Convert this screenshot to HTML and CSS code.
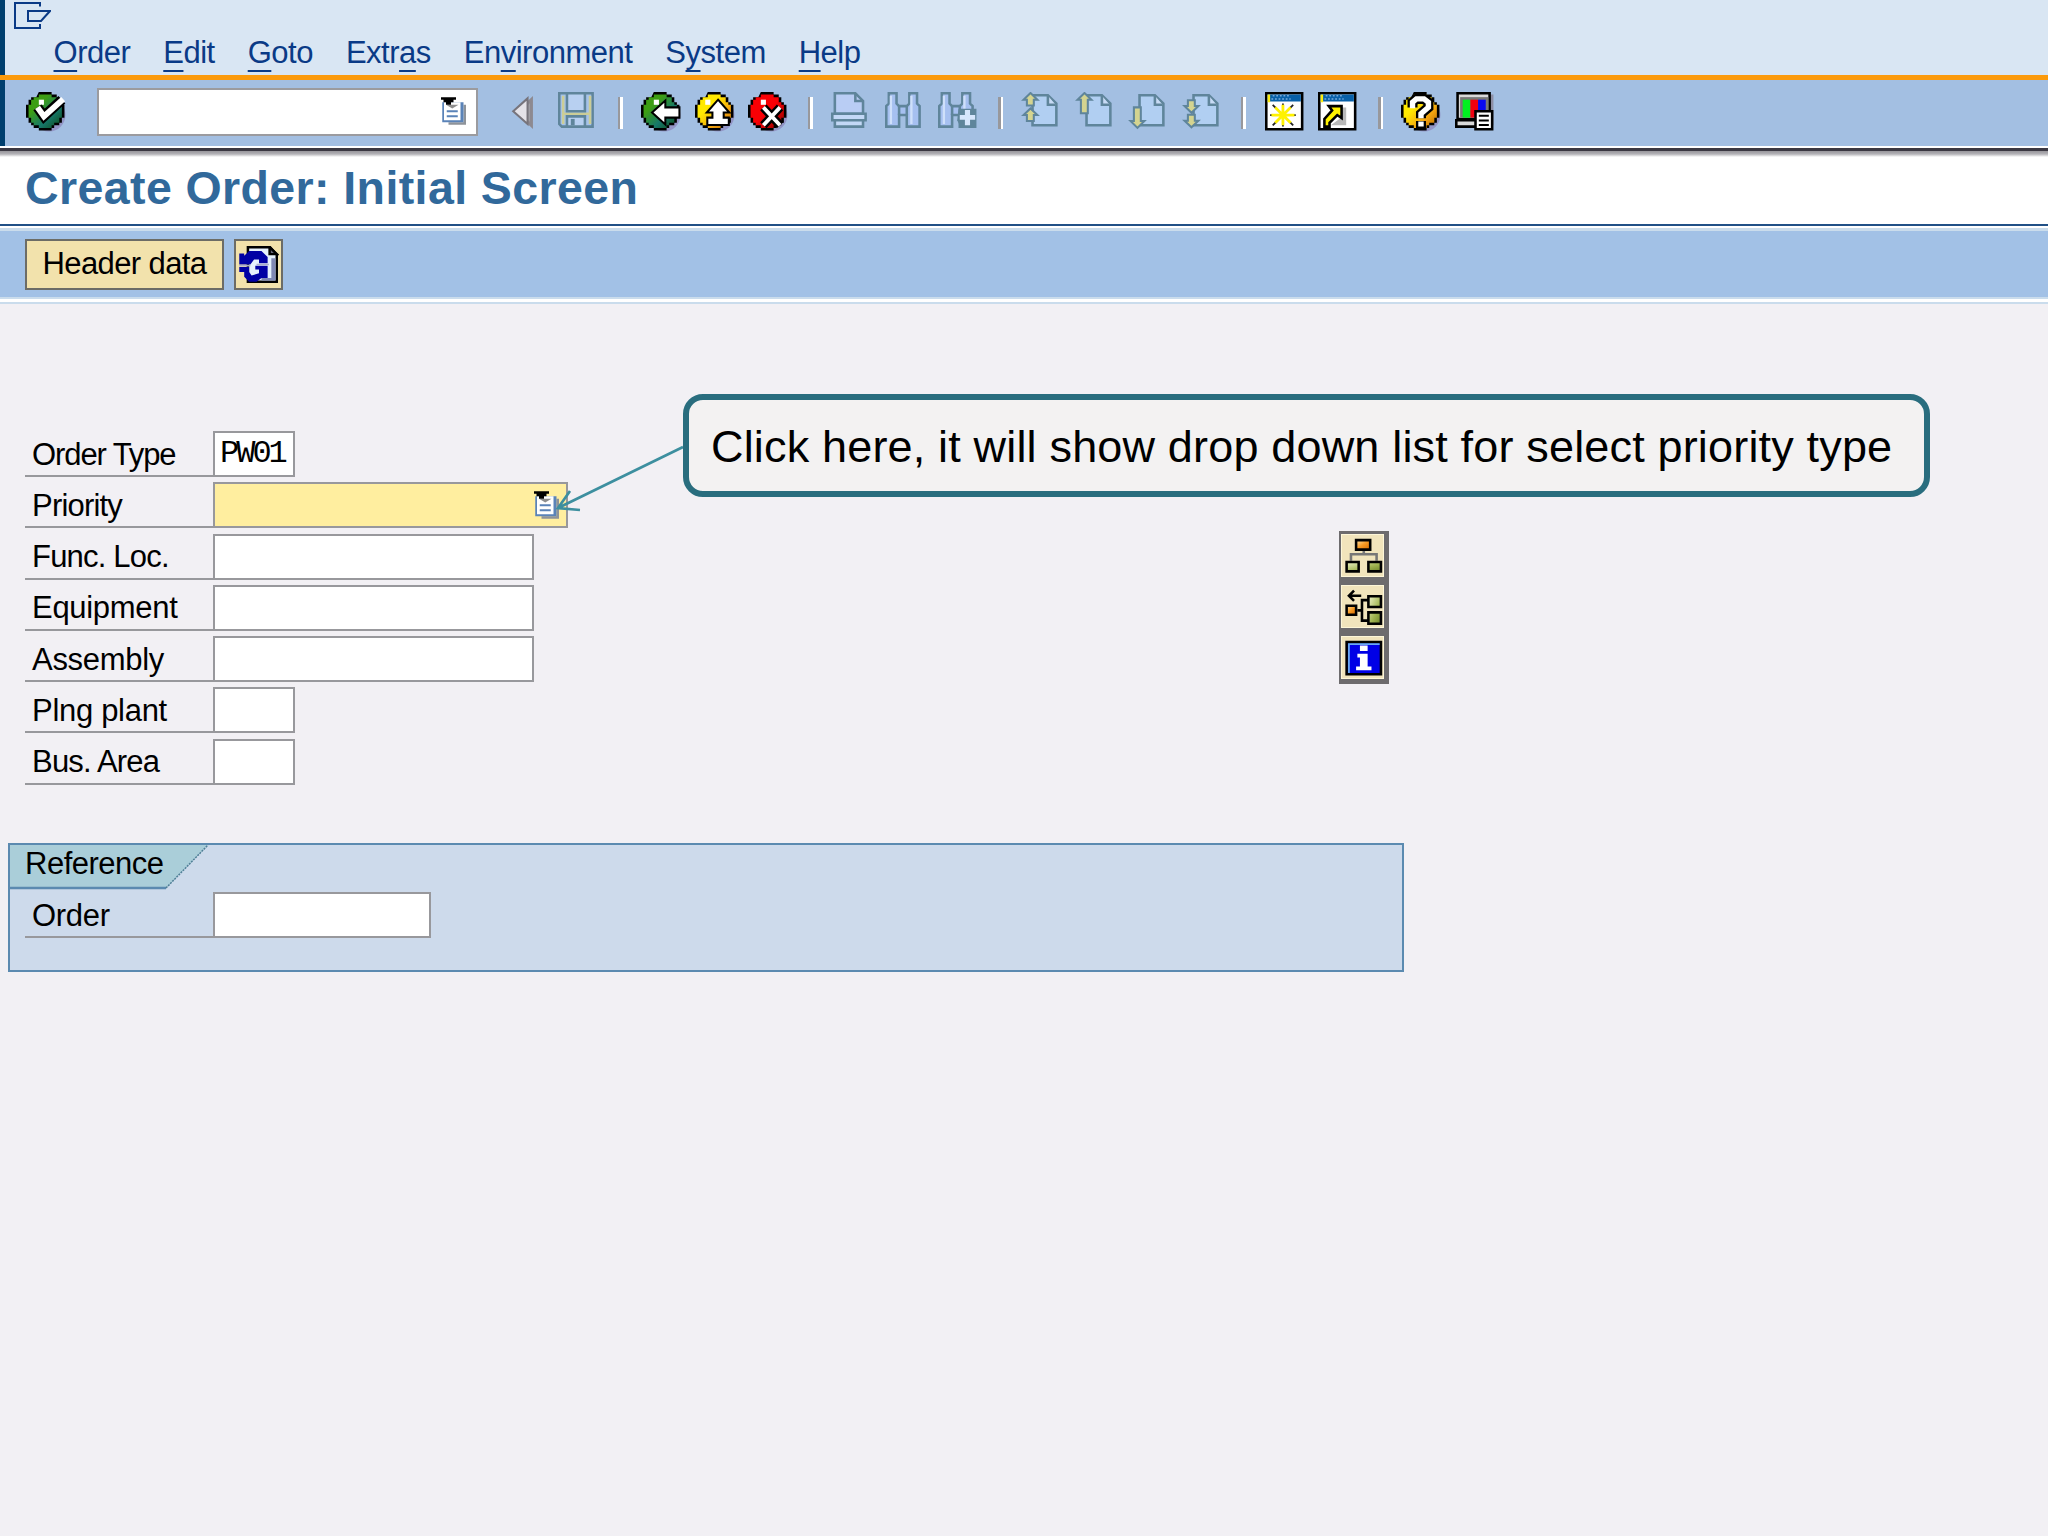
FILE: index.html
```html
<!DOCTYPE html>
<html lang="en">
<head>
	<meta charset="UTF-8">
	<title>Create Order: Initial Screen</title>
	<link rel="stylesheet" href="styles.css">
</head>
<body>
	<!-- shared shapes, one unit is one icon pixel -->
	<svg class="defs">
		<defs>
			<g id="ball">
				<circle cx="9" cy="9" r="6.4" fill="#9295c6"/>
				<path fill="#000" d="M5 0h5v1h2v1h1v2h1v1h1v5h-1v2h-1v1h-2v1h-1v1h-5v-1h-2v-1h-1v-1h-1v-2h-1v-5h1v-2h1v-1h2z"/>
			</g>
			<path id="ballFace" d="M5 1h5v1h2v2h1v1h1v5h-1v2h-2v1h-1v1h-5v-1h-2v-1h-1v-2h-1v-5h1v-2h1v-1h2z"/>
			<g id="page">
				<path d="M4.500 13V1.300H10.500L13.800 4.500V13Z" fill="#b1cff2" stroke="#5f859b"/>
				<path d="M10.500 1.500V5H13.500" fill="#c8dbf5" stroke="#5f859b"/>
			</g>
			<path id="up" d="M3.700 .4L6.400 3H5V5.300H2.300V3H1Z" fill="#d4d490" stroke="#5f859b" stroke-width=".8"/>
			<g id="binoc" stroke="#5f859b" fill="#a6c0f0">
				<path d="M1.500 .5H4.500V4.500L5.500 5.500H8.500L9.500 4.500V.5H12.500V4.500L13.500 5.500V13.500H8.500V9H5.500V13.500H.5V5.500L1.500 4.500Z"/>
				<path d="M5.500 5.500V9M8.500 5.500V9" fill="none"/>
				<path d="M2.300 1.500V12.500M10.300 1.500V12.500" stroke="#cfe0fa" stroke-width=".9"/>
			</g>
			<g id="list">
				<path fill="#8e9399" d="M3 10H9V3H10V11H3Z"/>
				<path fill="#5a83b8" d="M.5 2H9V10H.5Z"/>
				<path fill="#fff" d="M1.200 2H7.800V9.200H1.200Z"/>
				<path fill="#5a83b8" d="M2.300 5.200H6.700V6H2.300ZM2.300 7.200H6.700V8H2.300Z"/>
				<path fill="#8e8e8e" d="M2 3H7L4.500 4.500Z"/>
				<path fill="#000" d="M0 0H6V1H5V2H4V3H2V2H1V1H0Z"/>
			</g>
			<g id="win">
				<path d="M.5 .5H14.500V14.500H.5Z" fill="#fff" stroke="#000"/>
				<path d="M1 1H14V3.700H1Z" fill="#0860a8"/>
				<path d="M3 1.500H10M2.500 2.700H10" stroke="#77aadd" stroke-width=".6" stroke-dasharray=".7 .7" fill="none"/>
				<path d="M1 1H2V4H1Z" fill="#ffee10"/>
			</g>
			<linearGradient id="green" x2="1" y2="1"><stop offset=".3" stop-color="#3d9e14"/><stop offset=".65" stop-color="#16776b"/><stop offset="1" stop-color="#0e4a14"/></linearGradient>
			<linearGradient id="gold" x2="1" y2="1"><stop offset=".35" stop-color="#ffe900"/><stop offset=".7" stop-color="#f3a310"/><stop offset="1" stop-color="#b76a00"/></linearGradient>
			<linearGradient id="red" x2="1" y2="1"><stop offset=".5" stop-color="#fa0004"/><stop offset="1" stop-color="#8c0000"/></linearGradient>
			<linearGradient id="leaf" x2="1" y2="1"><stop offset="0" stop-color="#f0f4cc"/><stop offset=".6" stop-color="#a0b450"/><stop offset="1" stop-color="#6d8428"/></linearGradient>
			<linearGradient id="amber" x2="1" y2="1"><stop offset="0" stop-color="#ffe4a8"/><stop offset=".5" stop-color="#f79a24"/><stop offset="1" stop-color="#d66a00"/></linearGradient>
		</defs>
	</svg>

	<header class="top">
		<div class="window-bar">
			<svg class="window-icon" viewBox="0 0 37 27"><path d="M26 4.500V1H1V26H26V22M14 9H36L27 19H14Z"/></svg>
		</div>
		<nav class="menu">
			<span><u>O</u>rder</span>
			<span><u>E</u>dit</span>
			<span><u>G</u>oto</span>
			<span>Extr<u>a</u>s</span>
			<span>En<u>v</u>ironment</span>
			<span>S<u>y</u>stem</span>
			<span><u>H</u>elp</span>
		</nav>
		<div class="toolbar">
			<svg class="icon" viewBox="0 0 16 16">
				<use href="#ball"/><use href="#ballFace" fill="url(#green)"/>
				<path fill="#fff" d="M5 3H7V5H5Z"/>
				<path d="M4.500 6L7 9.500L14 3" fill="none" stroke="#000" stroke-width="4"/>
				<path d="M4.500 6L7 9.500L14.500 2.800" fill="none" stroke="#fff" stroke-width="2.300"/>
			</svg>
			<div class="command"><svg class="list-icon" viewBox="0 0 10 11"><use href="#list"/></svg></div>
			<svg class="icon" viewBox="0 0 16 16"><path d="M5 8L10.300 3V13Z" fill="#a19fa6" stroke="#8d8990" stroke-width="1.200"/><path d="M3.200 7.500L8.800 2.500V12.500Z" fill="#e4e2e8" stroke="#77747c" stroke-width=".8"/></svg>
			<svg class="icon" viewBox="0 0 16 16">
				<path d="M.5 .5H13.500V13.500H1.500L.5 12.500Z" fill="#a5c2ea" stroke="#5f859b"/>
				<path d="M2 1.500V12.500M12.500 1.500V12.500M2 8.500H12" stroke="#cccd96" fill="none"/>
				<path d="M3.500 .5H10.500V7.500H3.500ZM3.500 9.500H10.500V13.500H3.500Z" fill="#b8d0f1" stroke="#5f859b"/>
				<path d="M5 10.500H6.500V13H5Z" fill="#5f859b"/>
			</svg>
			<i class="sep"></i>
			<svg class="icon" viewBox="0 0 16 16">
				<use href="#ball"/><use href="#ballFace" fill="url(#green)"/>
				<path fill="#fff" d="M5 3H7V5H5Z"/>
				<path d="M4.300 8L9.500 3.300V6H15V10H9.500V12.700Z" fill="#fff" stroke="#000" stroke-width=".8"/>
			</svg>
			<svg class="icon" viewBox="0 0 16 16">
				<use href="#ball"/><use href="#ballFace" fill="url(#gold)"/>
				<path fill="#fff" d="M4 3H6V5H4Z"/>
				<path d="M9 3L13.400 8H11.200V10H13.200V12.900H4.800V10H6.800V8H4.600Z" fill="#fff" stroke="#000" stroke-width=".8"/>
			</svg>
			<svg class="icon" viewBox="0 0 16 16">
				<use href="#ball"/><use href="#ballFace" fill="url(#red)"/>
				<path fill="#fff" d="M5 3H7V5H5Z"/>
				<path d="M6 6L12.500 13M12.500 6L6 13" stroke="#000" stroke-width="3.400"/>
				<path d="M6 6L12.500 13M12.500 6L6 13" stroke="#fff" stroke-width="1.500"/>
			</svg>
			<i class="sep"></i>
			<svg class="icon" viewBox="0 0 16 16">
				<path d="M1.500 8.500V.5H9.500L12.500 3.500V8.500Z" fill="#b9cdf4" stroke="#5f859b"/>
				<path d="M9.500 .5V3.500H12.500" fill="none" stroke="#5f859b"/>
				<path d="M.5 8.500H13.500V11H.5ZM1.500 11H12.500V13.500H1.500Z" fill="#c3d8f6" stroke="#5f859b"/>
			</svg>
			<svg class="icon" viewBox="0 0 16 16"><use href="#binoc"/></svg>
			<svg class="icon" viewBox="0 0 16 16">
				<use href="#binoc"/>
				<path d="M8 6.500H15V14H9L7.500 11Z" fill="#5f859b"/>
				<path d="M10.500 7H12.500V9H14.500V10.800H12.500V13H10.500V10.800H8.500V9H10.500Z" fill="#d6e6fc"/>
			</svg>
			<i class="sep"></i>
			<svg class="icon" viewBox="0 0 16 16"><use href="#page"/><use href="#up"/><use href="#up" y="6"/></svg>
			<svg class="icon" viewBox="0 0 16 16"><use href="#page"/><path d="M3.700 .4L6.400 3H5V8.300H2.300V3H1Z" fill="#d4d490" stroke="#5f859b" stroke-width=".8"/></svg>
			<svg class="icon" viewBox="0 0 16 16"><use href="#page"/><path d="M3.700 14L6.400 11.300H5V6H2.300V11.300H1Z" fill="#d4d490" stroke="#5f859b" stroke-width=".8"/></svg>
			<svg class="icon" viewBox="0 0 16 16"><use href="#page"/><use href="#up" transform="matrix(1 0 0 -1 0 8.500)"/><use href="#up" transform="matrix(1 0 0 -1 0 14.200)"/></svg>
			<i class="sep"></i>
			<svg class="icon" viewBox="0 0 16 16">
				<use href="#win"/>
				<path d="M2 9H12M7 4.500V13.500M3 5L11 13M11 5L3 13" stroke="#222" stroke-width=".7"/>
				<path d="M2.500 9H11.500M7 5V13M4 6L10 12M10 6L4 12" stroke="#fff200" stroke-width="1.100"/>
				<path d="M6 8H8V10H6Z" fill="#fff200"/>
			</svg>
			<svg class="icon" viewBox="0 0 16 16">
				<use href="#win"/>
				<path d="M9 6H11V13H5L9 10Z" fill="#b9b9b9"/>
				<path d="M2.500 13.500V10.500L5.500 7.200L4.200 5.500H9.200V10.200L7.500 9L4.500 12V13.500Z" fill="#fff200" stroke="#000"/>
			</svg>
			<i class="sep"></i>
			<svg class="icon" viewBox="0 0 16 16">
				<use href="#ball"/><use href="#ballFace" fill="url(#gold)"/>
				<path d="M4.500 6V4L6 2.700H9L10.700 4V6L7.800 8.500V10.200M7.800 11.300V14" fill="none" stroke="#000" stroke-width="3.900"/>
				<path d="M4.500 6.300V4L6 2.700H9L10.700 4V6L7.800 8.500V10.200M7.800 11.500V13.500" fill="none" stroke="#fff" stroke-width="2.100"/>
			</svg>
			<svg class="icon" viewBox="0 0 16 16">
				<path d="M2 1H15V13H2Z" fill="#8e8fa5"/>
				<path d="M1 .5H13.500V10.500H1ZM.5 11H13.500V13.500H.5Z" fill="#d9d9d9" stroke="#000"/>
				<path d="M2 2H13V10H2Z" fill="#777"/>
				<path d="M3 3H6V10H3Z" fill="#00f020"/><path d="M6 3H9V10H6Z" fill="#f00010"/><path d="M9 3H12V10H9Z" fill="#0808f0"/>
				<path d="M8 7.500H14.500V14.500H8Z" fill="#fff" stroke="#000"/>
				<path d="M9.300 9.300H13.200M9.300 11.100H13.200M9.300 12.900H13.200" stroke="#000" stroke-width=".8"/>
			</svg>
		</div>
	</header>

	<h1 class="title">Create Order: Initial Screen</h1>

	<div class="actions">
		<button class="btn">Header data</button>
		<button class="btn btn-icon">
			<svg viewBox="0 0 16 15">
				<path d="M3.500 .5H12.500L15.200 3.500V14.500H3.500Z" fill="#e6f1fd" stroke="#000"/>
				<path d="M12.300 .5V3.300H15.200Z" fill="#66667a" stroke="#000"/>
				<path d="M13 5H14.700V14H9V13H13Z" fill="#8088b4"/>
				<path d="M0 3H2V4L4 2H9L11.500 4.500V7H8V5.500H6L4.500 7.500H0Z" fill="#0000a4"/>
				<path d="M0 8.500H4V10.500L5 12L8 11V9.500H6.500V8H11.500V13H9L7 14.500H4L2 12.500V10.500H0Z" fill="#0000a4"/>
				<path d="M0 8H4.500M7 7.500H12" stroke="#a9adca" stroke-width=".7"/>
			</svg>
		</button>
	</div>

	<main class="content">
		<div class="form">
			<div class="row"><label class="tight">Order Type</label><div class="field short">PW01</div></div>
			<div class="row"><label class="snug">Priority</label><div class="field priority"><svg class="list-icon" viewBox="0 0 10 11"><use href="#list"/></svg></div></div>
			<div class="row"><label class="snug">Func. Loc.</label><div class="field long"></div></div>
			<div class="row"><label>Equipment</label><div class="field long"></div></div>
			<div class="row"><label>Assembly</label><div class="field long"></div></div>
			<div class="row"><label>Plng plant</label><div class="field short"></div></div>
			<div class="row"><label class="snug">Bus. Area</label><div class="field short"></div></div>
		</div>

		<div class="side">
			<div class="side-btn">
				<svg viewBox="0 0 16 16">
					<path d="M8.500 5V7.500M3.500 10V7.500H13.500V10" fill="none" stroke="#777"/>
					<path d="M5.500 2H11V5.700H5.500Z" fill="url(#amber)" stroke="#000"/>
					<path d="M1.800 10.500H6.500V14.200H1.800ZM10.300 10.500H15.200V14.200H10.300Z" fill="url(#leaf)" stroke="#000"/>
				</svg>
			</div>
			<div class="side-btn">
				<svg viewBox="0 0 16 16">
					<path d="M2.500 3.800H7.500M4.700 1.800L2.700 3.800L4.700 5.800M6 9.500H8M10.500 5.500H7.800V13.500H10.500" fill="none" stroke="#000"/>
					<path d="M1.800 7.700H5.500V11.200H1.800Z" fill="url(#amber)" stroke="#000"/>
					<path d="M10.300 4H15.200V8.200H10.300ZM10.300 10.300H15.200V14.700H10.300Z" fill="url(#leaf)" stroke="#000"/>
				</svg>
			</div>
			<div class="side-btn">
				<svg viewBox="0 0 16 16">
					<path d="M1.800 2H15.200V14.500H1.800Z" fill="#0000e6" stroke="#000"/>
					<path d="M2.700 14V2.800H14.700" fill="none" stroke="#6aaaf0" stroke-width=".7"/>
					<path d="M7 3.300H10V5.500H7ZM6 6.500H10V11.500H11.500V13H5.500V11.500H7V8H6Z" fill="#fff"/>
				</svg>
			</div>
		</div>
	</main>

	<section class="reference">
		<div class="tab">
			<svg class="tab-shape" viewBox="0 0 200 45"><path d="M0 0H198L156 43H0Z" fill="#aaced9"/><path d="M0 43H156" stroke="#5b8ab0" stroke-width="2.500"/><path d="M156 43L198 0" stroke="#4f7f96" stroke-width="1.500" stroke-dasharray="2 1"/></svg>
			<span>Reference</span>
		</div>
		<div class="row"><label>Order</label><div class="field medium"></div></div>
	</section>

	<!-- note over the form, with its arrow -->
	<svg class="arrow" viewBox="0 0 130 70"><path d="M128 6L3 67M15 50L3 67L25 69"/></svg>
	<div class="callout">Click here, it will show drop down list for select priority type</div>
</body>
</html>
```
FILE: styles.css
```css
* { box-sizing: border-box; }

body {
	margin: 0;
	height: 1536px;
	overflow: hidden;
	position: relative;
	background: #f2f0f4;
	font: 31px/34px "Liberation Sans", Arial, sans-serif;
	letter-spacing: -.5px;
	color: #000;
}
svg { display: block; flex: none; }
.defs { position: absolute; width: 0; height: 0; }

/* menu and toolbar */
.top { border-left: 5px solid #003f6e; background: #d9e6f3; }
.window-bar { height: 35px; padding: 2px 0 0 9px; }
.window-icon { width: 37px; height: 27px; }
.window-icon path { fill: none; stroke: #0a3a86; stroke-width: 2; }
.menu { display: flex; gap: 33px; height: 40px; padding: 1px 0 0 48.500px; color: #0a3a86; }
.menu u { text-decoration-thickness: 2px; text-underline-offset: 7px; text-decoration-skip-ink: none; }
.toolbar {
	display: flex;
	gap: 12.500px;
	height: 73px;
	margin-left: -5px;
	padding: 12px 0 0 26px;
	background: linear-gradient(90deg, #003f6e 5px, #a3bfe2 5px);
	border-top: 5px solid #fb9a0c;
	border-bottom: 2px solid #fff;
}
.icon { width: 41px; height: 41px; }
.command {
	display: flex;
	justify-content: flex-end;
	width: 381px;
	height: 48px;
	margin: -4px 14px 0 17.500px;
	padding: 7px 10px 0 0;
	background: #fff;
	border: 2px solid #9b9b9f;
}
.list-icon { width: 25px; height: 28px; }
.sep { width: 5px; height: 32px; margin: 5px 6px 0; background: linear-gradient(90deg, #98989c 50%, #fff 50%); }

.title {
	height: 78px;
	margin: 0;
	padding: 13px 0 0 25px;
	border-top: 3px solid #3b3842;
	border-bottom: 2px solid #215086;
	background: linear-gradient(#98969c, #b3b2b6 3px, #fff 6px);
	color: #31699b;
	font-size: 46.500px;
	line-height: 48px;
	letter-spacing: .4px;
}
.actions {
	display: flex;
	gap: 10px;
	height: 78px;
	padding: 12.500px 0 0 25px;
	background: linear-gradient(#fff 2px, #cadcec 2px, #cadcec 5px, #a2c1e6 5px, #a2c1e6 71px, #cadcec 71px, #cadcec 73px, #fff 73px, #fff 76px, #cadcec 76px);
}
.btn {
	width: 199px;
	height: 51px;
	padding: 0;
	background: #f2e2ac;
	border: 2px solid #6c6c66;
	color: #000;
	font: inherit;
	letter-spacing: -.6px;
}
.btn-icon { width: 49px; padding: 0 0 0 3px; }
.btn-icon svg { width: 40px; height: 37px; }

/* form */
.content { display: flex; padding: 127px 0 0 25px; }
.form { display: flex; flex-direction: column; gap: 5.250px; width: 1314px; }
.row { display: flex; height: 46px; }
label { width: 188px; padding: 6.500px 0 0 7px; border-bottom: 2px solid #98989c; white-space: nowrap; letter-spacing: -.3px; }
.tight { letter-spacing: -1.100px; }
.snug { letter-spacing: -.8px; }
.field { height: 46px; background: #fff; border: 2px solid #98989c; }
.short { width: 82px; padding: 4px 0 0 5px; font-family: "Liberation Mono", monospace; font-size: 32px; letter-spacing: -3px; }
.medium { width: 218px; }
.long { width: 321px; }
.priority { display: flex; justify-content: flex-end; width: 355px; padding: 7px 7px 0 0; background: #ffee9f; }

.side {
	display: flex;
	flex-direction: column;
	gap: 8px;
	width: 50px;
	height: 153px;
	margin-top: 100px;
	padding: 3px 0 0 2px;
	background: #6d6b6d;
}
.side-btn { width: 43px; height: 43px; background: #f1e4bc; border: 1px solid #fdf6d8; }
.side-btn svg { width: 41px; height: 41px; }

/* reference box */
.reference {
	width: 1396px;
	height: 129px;
	margin: 58.500px 0 0 8px;
	border: 2px solid #5b8ab0;
	background: #cddaeb;
}
.reference .row { margin: 1px 0 0 15px; }
.tab { position: relative; height: 46px; padding: 2px 0 0 15px; }
.tab span { position: relative; }
.tab-shape { position: absolute; left: 0; top: 0; width: 200px; height: 45px; }

/* note */
.callout {
	position: absolute;
	left: 683px;
	top: 394px;
	width: 1247px;
	height: 103px;
	padding: 22px 0 0 22px;
	border: 6px solid #296d7e;
	border-radius: 20px;
	background: #f3f2f2;
	font-size: 45px;
	line-height: 50px;
	letter-spacing: .170px;
	white-space: nowrap;
}
.arrow { position: absolute; left: 555px; top: 441px; width: 130px; height: 70px; overflow: visible; }
.arrow path { fill: none; stroke: #3d8f9f; stroke-width: 2.700; }
```
